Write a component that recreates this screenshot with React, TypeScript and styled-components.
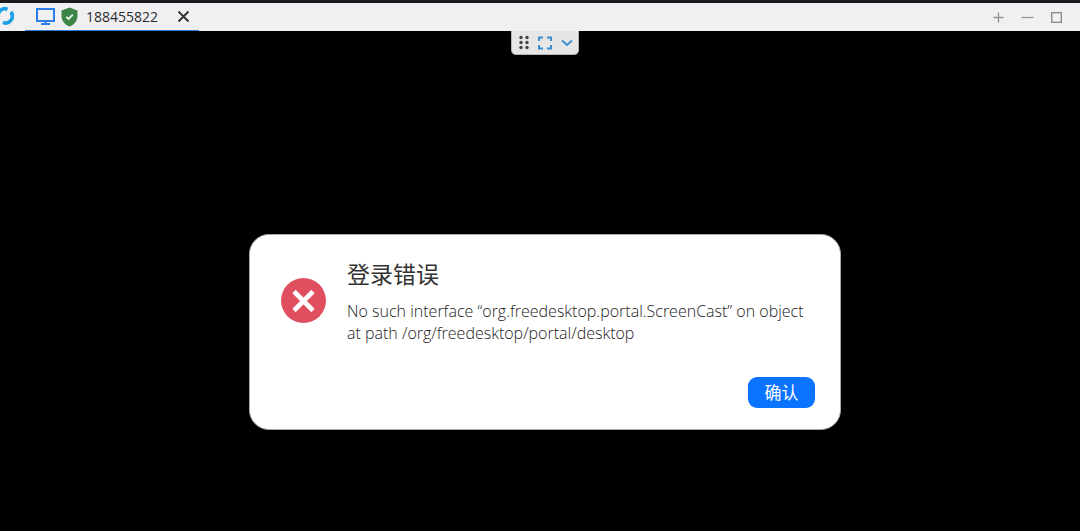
import React from "react";
import styled, { createGlobalStyle } from "styled-components";

const GlobalStyle = createGlobalStyle`
  * { box-sizing: border-box; }
  body {
    margin: 0;
    background: #000;
    font-family: "Open Sans", "Noto Sans CJK SC", sans-serif;
  }
  button { font-family: inherit; cursor: pointer; }
`;

const Window = styled.div`
  display: flex;
  flex-direction: column;
  min-height: 100vh;
`;

const TitleBar = styled.header`
  display: flex;
  align-items: stretch;
  height: 31px;
  background: #f0f0f2;
  border-top: 3px solid #1b191e;
`;

const Logo = styled.svg`
  flex: none;
  width: 14px;
  height: 26px;
`;

const Tab = styled.div`
  display: flex;
  align-items: center;
  width: 174px;
  margin-left: 11px;
  padding: 0 8px 0 11px;
  border-bottom: 1px solid #2b7bd3;
`;

const TabLabel = styled.span`
  flex: 1;
  margin-left: 8px;
  font-size: 14px;
  line-height: 20px;
  color: #2c2c2e;
`;

const ShieldIcon = styled.svg`
  flex: none;
  margin-left: 6px;
`;

const IconButton = styled.button<{ $width: number }>`
  display: flex;
  align-items: center;
  justify-content: center;
  width: ${(p) => p.$width}px;
  padding: 0;
  border: 0;
  background: none;
`;

const WindowControls = styled.div`
  display: flex;
  margin-left: auto;
  padding-right: 9px;
`;

const RemoteScreen = styled.main`
  display: flex;
  flex: 1;
  flex-direction: column;
  align-items: center;
  padding-left: 10px;
  background: #000;
`;

const Toolbar = styled.div`
  display: flex;
  align-items: stretch;
  height: 24px;
  padding: 0 1px;
  border: 1px solid #b4b4b4;
  border-top: 0;
  border-radius: 0 0 5px 5px;
  background: #e6e6e6;
`;

const Dialog = styled.section`
  display: grid;
  grid-template-columns: 45px 1fr;
  column-gap: 21px;
  width: 592px;
  max-width: 100%;
  margin-top: 179px;
  padding: 23px 25px 21px 31px;
  border: 1px solid #a8a8a8;
  border-radius: 20px;
  background: #fff;
`;

const ErrorIcon = styled.svg`
  margin-top: 20px;
`;

const Title = styled.h1`
  margin: 0;
  font-size: 23px;
  font-weight: 400;
  line-height: 32px;
  color: #333;
`;

const Message = styled.p`
  margin: 10px 0 0;
  font-size: 16px;
  font-weight: 300;
  line-height: 22px;
  color: #222;
`;

const Actions = styled.div`
  display: flex;
  grid-column: 1 / -1;
  justify-content: flex-end;
  margin-top: 33px;
`;

const ConfirmButton = styled.button`
  width: 67px;
  height: 31px;
  padding: 0;
  border: 0;
  border-radius: 9px;
  background: #0a73ff;
  color: #fff;
  font-size: 17px;
  line-height: 30px;
`;

export default function App() {
  return (
    <>
      <GlobalStyle />
      <Window>
        <TitleBar>
          <Logo viewBox="0 0 14 26" fill="none" stroke="#1ba0e8" strokeWidth="3.6" aria-hidden="true">
            <path d="M-1.5 14.5A6.7 6.7 0 0 1 7.5 6.3" />
            <path d="M10.8 9A6.7 6.7 0 0 1 3 19.4" />
          </Logo>
          <Tab>
            <svg width="19" height="18" viewBox="0 0 19 18" fill="none" stroke="#2b7de9" strokeWidth="2" aria-hidden="true">
              <rect x="1" y="1" width="17" height="12" />
              <path d="M9.500 13v3M5 16h9" />
            </svg>
            <ShieldIcon width="17" height="20" viewBox="0 0 17 20" aria-hidden="true">
              <path d="M8.500 0.500L16.500 3.500V9C16.500 14 13 18 8.500 19.500C4 18 0.500 14 0.500 9V3.500Z" fill="#3d8447" />
              <path d="M5.300 9.800L7.600 12L11.800 7.700" fill="none" stroke="#eef6ee" strokeWidth="1.8" />
            </ShieldIcon>
            <TabLabel>188455822</TabLabel>
            <IconButton $width={15} aria-label="Close tab">
              <svg width="13" height="13" viewBox="0 0 13 13" stroke="#333" strokeWidth="1.900">
                <path d="M1.500 1.500l10 10M11.500 1.500l-10 10" />
              </svg>
            </IconButton>
          </Tab>
          <WindowControls>
            <IconButton $width={29} aria-label="New tab">
              <svg width="11" height="11" viewBox="0 0 11 11" stroke="#929294" strokeWidth="1.300">
                <path d="M5.500 0.500v10M0.500 5.500h10" />
              </svg>
            </IconButton>
            <IconButton $width={29} aria-label="Minimize">
              <svg width="13" height="11" viewBox="0 0 13 11" stroke="#929294" strokeWidth="1.200">
                <path d="M0.500 5.500h12" />
              </svg>
            </IconButton>
            <IconButton $width={29} aria-label="Maximize">
              <svg width="11" height="11" viewBox="0 0 11 11" fill="none" stroke="#858588" strokeWidth="1.300">
                <rect x="0.700" y="0.700" width="9.600" height="9.600" />
              </svg>
            </IconButton>
          </WindowControls>
        </TitleBar>
        <RemoteScreen>
          <Toolbar>
            <IconButton $width={21} aria-label="Move toolbar">
              <svg width="10" height="15" viewBox="0 0 10 15" fill="#444">
                <circle cx="2" cy="2.500" r="1.700" />
                <circle cx="8" cy="2.500" r="1.700" />
                <circle cx="2" cy="7.500" r="1.700" />
                <circle cx="8" cy="7.500" r="1.700" />
                <circle cx="2" cy="12.500" r="1.700" />
                <circle cx="8" cy="12.500" r="1.700" />
              </svg>
            </IconButton>
            <IconButton $width={22} aria-label="Full screen">
              <svg width="14" height="14" viewBox="0 0 14 14" fill="none" stroke="#3c8fd0" strokeWidth="2">
                <path d="M1 5V1.500H5M9 1.500H13V5M13 9V12.500H9M5 12.500H1V9" />
              </svg>
            </IconButton>
            <IconButton $width={21} aria-label="Expand toolbar">
              <svg width="12" height="8" viewBox="0 0 12 8" fill="none" stroke="#3c8fd0" strokeWidth="2">
                <path d="M1 1.500l5 4.500l5-4.500" />
              </svg>
            </IconButton>
          </Toolbar>
          <Dialog role="alertdialog" aria-labelledby="dialog-title" aria-describedby="dialog-message">
            <ErrorIcon width="45" height="45" viewBox="0 0 45 45" aria-hidden="true">
              <circle cx="22.500" cy="22.500" r="22.500" fill="#e04f5f" />
              <path d="M13 13.500l19 19M32 13.500l-19 19" stroke="#fff" strokeWidth="4.600" />
            </ErrorIcon>
            <div>
              <Title id="dialog-title">登录错误</Title>
              <Message id="dialog-message">
                No such interface “org.freedesktop.portal.ScreenCast” on object at path
                /org/freedesktop/portal/desktop
              </Message>
            </div>
            <Actions>
              <ConfirmButton>确认</ConfirmButton>
            </Actions>
          </Dialog>
        </RemoteScreen>
      </Window>
    </>
  );
}
